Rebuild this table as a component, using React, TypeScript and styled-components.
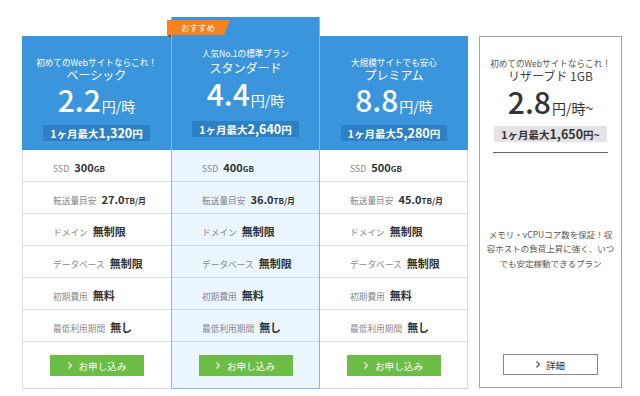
import styled, { createGlobalStyle } from 'styled-components';

const GlobalStyle = createGlobalStyle`
  html,
  body {
    margin: 0;
    padding: 0;
    background: #fff;
  }
  body {
    font-family: "Noto Sans CJK JP", "Noto Sans", sans-serif;
    color: #333;
  }
  * {
    box-sizing: border-box;
  }
`;

type Plan = {
  tag: string;
  name: string;
  price: string;
  monthly: string;
  ssd: string;
  transfer: string;
  featured?: boolean;
};

type Pos = 'first' | 'mid' | 'last';

const plans: Plan[] = [
  { tag: '初めてのWebサイトならこれ！', name: 'ベーシック', price: '2.2', monthly: '1,320', ssd: '300', transfer: '27.0' },
  { tag: '人気No.1の標準プラン', name: 'スタンダード', price: '4.4', monthly: '2,640', ssd: '400', transfer: '36.0', featured: true },
  { tag: '大規模サイトでも安心', name: 'プレミアム', price: '8.8', monthly: '5,280', ssd: '500', transfer: '45.0' },
];

const Chevron = ({ color }: { color: string }) => (
  <svg width="4" height="7" viewBox="0 0 4 7">
    <polyline points="0.5,0.5 3.5,3.5 0.5,6.5" fill="none" stroke={color} strokeWidth="1.2" />
  </svg>
);

const App = () => {
  return (
    <>
      <GlobalStyle />
      <Page>
        <PlanGroup>
          {plans.map((p, i) => {
            const pos: Pos = i === 0 ? 'first' : i === plans.length - 1 ? 'last' : 'mid';
            return (
              <Column key={p.name} $featured={p.featured} $pos={pos}>
                {p.featured && (
                  <>
                    <Badge>おすすめ</Badge>
                    <BadgeFold />
                  </>
                )}
                <Header $featured={p.featured}>
                  <Tagline $featured={p.featured}>{p.tag}</Tagline>
                  <PlanName $featured={p.featured}>{p.name}</PlanName>
                  <Price>
                    <PriceNum>{p.price}</PriceNum>
                    <PriceUnit>円/時</PriceUnit>
                  </Price>
                  <Monthly $featured={p.featured}>
                    1ヶ月最大<MonthlyNum>{p.monthly}</MonthlyNum>円
                  </Monthly>
                </Header>
                <Body $featured={p.featured} $pos={pos}>
                  <Row $featured={p.featured}>
                    <Label>SSD</Label>
                    <Value>
                      {p.ssd}
                      <Unit>GB</Unit>
                    </Value>
                  </Row>
                  <Row $featured={p.featured}>
                    <Label>転送量目安</Label>
                    <Value>
                      {p.transfer}
                      <Unit>TB/月</Unit>
                    </Value>
                  </Row>
                  <Row $featured={p.featured}>
                    <Label>ドメイン</Label>
                    <Value>無制限</Value>
                  </Row>
                  <Row $featured={p.featured}>
                    <Label>データベース</Label>
                    <Value>無制限</Value>
                  </Row>
                  <Row $featured={p.featured}>
                    <Label>初期費用</Label>
                    <Value>無料</Value>
                  </Row>
                  <Row $featured={p.featured}>
                    <Label>最低利用期間</Label>
                    <Value>無し</Value>
                  </Row>
                  <ButtonRow>
                    <ApplyButton>
                      <Chevron color="#fff" />
                      お申し込み
                    </ApplyButton>
                  </ButtonRow>
                </Body>
              </Column>
            );
          })}
        </PlanGroup>

        <ReservedCard>
          <Tagline $muted>初めてのWebサイトならこれ！</Tagline>
          <PlanName $muted>リザーブド 1GB</PlanName>
          <Price $muted>
            <PriceNum>2.8</PriceNum>
            <PriceUnit>円/時~</PriceUnit>
          </Price>
          <Monthly $muted>
            1ヶ月最大<MonthlyNum>1,650</MonthlyNum>円~
          </Monthly>
          <Divider />
          <Description>
            メモリ・vCPUコア数を保証！収
            <br />
            容ホストの負荷上昇に強く、いつ
            <br />
            でも安定稼動できるプラン
          </Description>
          <DetailButton>
            <Chevron color="#555" />
            詳細
          </DetailButton>
        </ReservedCard>
      </Page>
    </>
  );
};

export default App;

const BLUE = '#3a95dd';

const Page = styled.div`
  display: flex;
  align-items: flex-end;
  padding: 17px 0 0 22px;
`;

const PlanGroup = styled.div`
  display: flex;
  align-items: flex-end;
`;

const Column = styled.div<{ $featured?: boolean; $pos: Pos }>`
  position: relative;
  width: ${(p) => (p.$pos === 'last' ? 148 : 149)}px;
  display: flex;
  flex-direction: column;
  ${(p) =>
    p.$featured &&
    `
    border-left: 1px solid #8db9da;
    border-right: 1px solid #8db9da;
  `}
`;

const Badge = styled.div`
  position: absolute;
  left: -5px;
  top: 3px;
  width: 63px;
  height: 15px;
  padding-left: 14px;
  background: #f5821f;
  color: #fff;
  font-size: 8.5px;
  line-height: 15px;
  clip-path: polygon(0 0, 100% 0, calc(100% - 6px) 100%, 0 100%);
  z-index: 2;
`;

const BadgeFold = styled.span`
  position: absolute;
  left: -5px;
  top: 18px;
  width: 0;
  height: 0;
  border-top: 3px solid #8a4410;
  border-left: 4px solid transparent;
  z-index: 2;
`;

const Header = styled.div<{ $featured?: boolean }>`
  height: ${(p) => (p.$featured ? 133 : 114)}px;
  padding-top: ${(p) => (p.$featured ? 29 : 20)}px;
  background: ${BLUE};
  color: #fff;
  display: flex;
  flex-direction: column;
  align-items: center;
  text-align: center;
`;

const Tagline = styled.div<{ $featured?: boolean; $muted?: boolean }>`
  font-size: 8.6px;
  line-height: ${(p) => (p.$featured ? 14 : 12)}px;
  color: ${(p) => (p.$muted ? '#555' : '#fff')};
  white-space: nowrap;
`;

const PlanName = styled.div<{ $featured?: boolean; $muted?: boolean }>`
  font-size: 12px;
  line-height: ${(p) => (p.$featured ? 15 : p.$muted ? 14 : 13)}px;
  color: ${(p) => (p.$muted ? '#444' : '#fff')};
  white-space: nowrap;
`;

const Price = styled.div<{ $muted?: boolean }>`
  line-height: 36px;
  height: 36px;
  color: ${(p) => (p.$muted ? '#333' : '#fff')};
  white-space: nowrap;
`;

const PriceNum = styled.span`
  font-size: 30px;
  font-weight: 500;
`;

const PriceUnit = styled.span`
  font-size: 14px;
  margin-left: 1px;
`;

const Monthly = styled.div<{ $featured?: boolean; $muted?: boolean }>`
  margin-top: ${(p) => (p.$featured ? 10 : p.$muted ? 7 : 8)}px;
  height: 16px;
  line-height: 16px;
  padding: 0 7px;
  font-size: 10.5px;
  font-weight: 700;
  white-space: nowrap;
  background: ${(p) => (p.$muted ? '#e3e3e3' : '#2d80c4')};
  color: ${(p) => (p.$muted ? '#333' : '#fff')};
`;

const MonthlyNum = styled.span`
  font-size: 12.5px;
`;

const Body = styled.div<{ $featured?: boolean; $pos: Pos }>`
  display: flex;
  flex-direction: column;
  background: ${(p) => (p.$featured ? '#eaf5fd' : '#fff')};
  border-bottom: 1px solid ${(p) => (p.$featured ? '#8db9da' : '#dcdcdc')};
  ${(p) => p.$pos === 'first' && 'border-left: 1px solid #dcdcdc;'}
  ${(p) => p.$pos === 'last' && 'border-right: 1px solid #dcdcdc;'}
`;

const Row = styled.div<{ $featured?: boolean }>`
  height: 32px;
  display: flex;
  align-items: baseline;
  padding: 9px 0 0 30px;
  gap: 5px;
  border-bottom: 1px solid ${(p) => (p.$featured ? '#c7dbea' : '#dcdcdc')};
`;

const Label = styled.span`
  font-size: 8.7px;
  color: #888;
  white-space: nowrap;
`;

const Value = styled.span`
  font-size: 11px;
  font-weight: 700;
  color: #333;
  white-space: nowrap;
`;

const Unit = styled.span`
  font-size: 8px;
`;

const ButtonRow = styled.div`
  height: 46px;
  display: flex;
  align-items: center;
  justify-content: center;
  padding-top: 1px;
`;

const ApplyButton = styled.div`
  width: 94px;
  height: 21px;
  background: #6bbd45;
  color: #fff;
  font-size: 9.6px;
  display: flex;
  align-items: center;
  justify-content: center;
  gap: 7px;
`;

const ReservedCard = styled.div`
  margin-left: 11px;
  margin-bottom: 1px;
  width: 143px;
  height: 352px;
  border: 1px solid #a3a3a3;
  padding: 20px 0 12px;
  display: flex;
  flex-direction: column;
  align-items: center;
  text-align: center;
`;

const Divider = styled.div`
  margin-top: 10px;
  width: 115px;
  height: 1px;
  background: #666;
`;

const Description = styled.div`
  flex: 1;
  display: flex;
  align-items: center;
  justify-content: center;
  padding-bottom: 10px;
  font-size: 8.5px;
  line-height: 14.5px;
  color: #555;
  white-space: nowrap;
`;

const DetailButton = styled.div`
  width: 95px;
  height: 21px;
  border: 1px solid #888;
  background: #fff;
  color: #333;
  font-size: 9.5px;
  display: flex;
  align-items: center;
  justify-content: center;
  gap: 6px;
`;
